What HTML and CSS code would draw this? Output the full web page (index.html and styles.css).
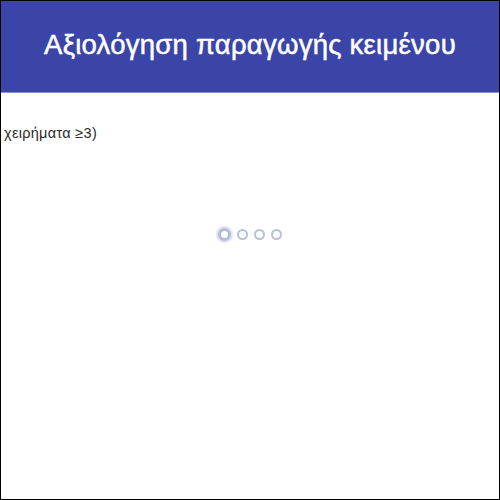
FILE: index.html
```html
<!DOCTYPE html>
<html lang="el">
<head>
<meta charset="utf-8">
<link rel="stylesheet" href="styles.css">
</head>
<body>
<div class="frame">
  <header class="topbar">
    <h1 class="title">Αξιολόγηση παραγωγής κειμένου</h1>
  </header>
  <main class="content">
    <p class="criterion">χειρήματα ≥3)</p>
    <div class="loader">
      <span class="dot active"></span>
      <span class="dot"></span>
      <span class="dot"></span>
      <span class="dot"></span>
    </div>
  </main>
</div>
</body>
</html>
```
FILE: styles.css
```css
* { box-sizing: border-box; }
html, body { margin: 0; padding: 0; background: #fff; }
body { font-family: "Liberation Sans", Arial, sans-serif; }
.frame {
  width: 500px;
  height: 500px;
  border: 1px solid #000;
  display: flex;
  flex-direction: column;
  overflow: hidden;
}
.topbar {
  height: 92px;
  background: #3b45a8;
  display: flex;
  align-items: center;
  justify-content: center;
  padding-bottom: 3px;
  border-bottom: 1px solid #8a90d0;
}
.title {
  margin: 0;
  color: #fff;
  font-weight: normal;
  font-size: 27.5px;
  letter-spacing: 0.25px;
  -webkit-text-stroke: 0.5px #fff;
}
.content {
  flex: 1;
  display: flex;
  flex-direction: column;
}
.criterion {
  margin: 32px 0 0 0;
  padding-left: 3px;
  font-size: 14.5px;
  letter-spacing: 0.3px;
  color: #2a2a2a;
  white-space: nowrap;
}
.loader {
  margin-top: 87px;
  display: flex;
  align-items: center;
  justify-content: center;
  gap: 6px;
}
.dot {
  width: 11px;
  height: 11px;
  border-radius: 50%;
  border: 2px solid #b9c0da;
}
.dot.active {
  width: 13px;
  height: 13px;
  border: 3px solid #b3bcdc;
  box-shadow: 0 0 0 2px #e1e5f2;
  background: #fff;
}
```
